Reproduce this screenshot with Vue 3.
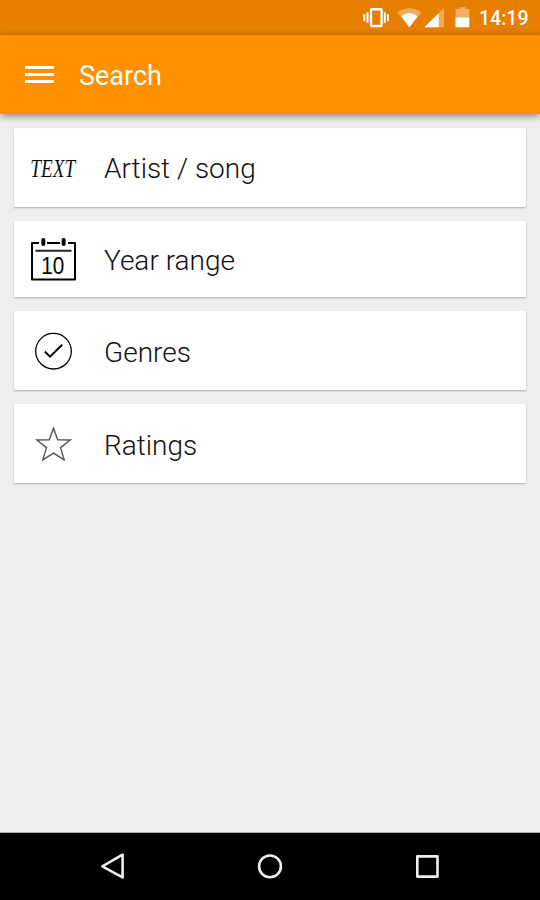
<template>
    <div class="screen">
        <div class="status-bar">
            <!-- vibrate, wifi, signal, battery -->
            <svg class="status-icons" width="112" height="35" viewBox="0 0 112 35">
                <g fill="#fff">
                    <rect x="0.3" y="14.3" width="2" height="6.6" />
                    <rect x="3.5" y="12.3" width="2" height="10.6" />
                    <rect x="20.8" y="12.3" width="2" height="10.6" />
                    <rect x="24" y="14.3" width="2" height="6.6" />
                </g>
                <rect x="8" y="9.2" width="10.6" height="16.8" rx="1" fill="none" stroke="#fff" stroke-width="2.4" />
                <path d="M46.3 27.2 L34.3 12.4 Q46.3 4.2 58.4 12.4 Z" fill="#fff" fill-opacity="0.35" />
                <path d="M46.3 27.2 L38.3 16.2 Q46.3 10 54.6 16.2 Z" fill="#fff" />
                <path d="M81 8 V27.3 H61.4 Z" fill="#fff" fill-opacity="0.35" />
                <path d="M75.7 13.2 V27.3 H61.4 Z" fill="#fff" />
                <path d="M92.5 17.3 V9 H96.3 V7.2 H102.6 V9 H106.3 V17.3 Z" fill="#fff" fill-opacity="0.4" />
                <rect x="92.5" y="17.3" width="13.8" height="10" fill="#fff" />
            </svg>
            <span class="clock">14:19</span>
        </div>

        <header class="toolbar">
            <div class="menu">
                <span></span>
                <span></span>
                <span></span>
            </div>
            <h1 class="title">Search</h1>
        </header>

        <main class="list">
            <div v-for="item in items" :key="item.id" class="card" :class="item.id">
                <svg class="icon" width="50" height="50" viewBox="0 0 50 50">
                    <text v-if="item.id === 'artist'" class="icon-text" x="1.2" y="34" textLength="45"
                        lengthAdjust="spacingAndGlyphs">TEXT</text>

                    <g v-else-if="item.id === 'year'">
                        <path d="M10 9 H3 V45.4 H46 V9 H39 M18 9 H31" fill="none" stroke="#000" stroke-width="2"
                            stroke-linejoin="round" />
                        <path d="M6.5 16.8 H42.5" stroke="#222" stroke-width="2" />
                        <rect x="12.3" y="4" width="4" height="8" rx="1.9" />
                        <rect x="32.6" y="4" width="4" height="8" rx="1.9" />
                        <text class="icon-day" x="12.3" y="40" textLength="23" lengthAdjust="spacingAndGlyphs">10</text>
                    </g>

                    <g v-else-if="item.id === 'genres'" fill="none" stroke="#000">
                        <circle cx="24.5" cy="25.2" r="17.8" stroke-width="1.3" />
                        <path d="M15.8 25.5 L21 30.7 L33.2 18.8" stroke-width="1.9" />
                    </g>

                    <path v-else
                        d="M24.5 9.2 L28.7 20.7 L41.3 21 L31.5 28.6 L35.2 40.9 L24.5 34.1 L13.8 40.9 L17.5 28.6 L7.7 21 L20.3 20.7 Z"
                        fill="none" stroke="#555" stroke-width="1.4" />
                </svg>
                <span class="label">{{ item.label }}</span>
            </div>
        </main>

        <nav class="nav-bar">
            <svg width="540" height="67" viewBox="0 0 540 67" fill="none" stroke="#eee" stroke-width="2.6"
                stroke-linejoin="round">
                <path d="M122.6 21.6 V44.4 L102.3 33.3 Z" />
                <circle cx="270" cy="33.4" r="10.9" />
                <rect x="417.3" y="23.4" width="20.2" height="20.2" />
            </svg>
        </nav>
    </div>
</template>

<script setup>
const items = [
    { id: 'artist', label: 'Artist / song' },
    { id: 'year', label: 'Year range' },
    { id: 'genres', label: 'Genres' },
    { id: 'ratings', label: 'Ratings' }
];
</script>

<style>
body {
    margin: 0;
    background: #eee;
}
</style>

<style scoped>
.screen {
    display: flex;
    flex-direction: column;
    width: 540px;
    height: 900px;
    overflow: hidden;
    background: #eee;
    font-family: Roboto, sans-serif;
}

.status-bar {
    display: flex;
    align-items: center;
    justify-content: flex-end;
    height: 35px;
    padding-right: 11px;
    background: #e67e00;
    color: #fff;
}

.status-icons {
    margin-right: 4px;
}

.clock {
    width: 50px;
    padding-top: 2px;
    font-size: 19.5px;
    font-weight: 500;
    line-height: 35px;
    white-space: nowrap;
}

.toolbar {
    display: flex;
    align-items: center;
    height: 79px;
    padding-left: 25px;
    background: #ff9000;
    box-shadow: 0 2px 7px rgba(0, 0, 0, 0.45);
}

.menu {
    display: flex;
    flex-direction: column;
    gap: 4px;
    width: 29px;
    margin-right: 25px;
}

.menu span {
    height: 3px;
    background: #fff;
}

.title {
    margin: 3px 0 0;
    color: #fff;
    font-size: 27px;
    font-weight: 400;
    line-height: 32px;
}

/* cards */
.list {
    display: flex;
    flex: 1;
    flex-direction: column;
    padding: 14px 14px 0;
}

.card {
    display: flex;
    align-items: center;
    box-sizing: border-box;
    height: 79px;
    margin-bottom: 14px;
    padding-left: 15px;
    border-radius: 1px;
    background: #fff;
    box-shadow: 0 1px 2px rgba(0, 0, 0, 0.28);
}

.card.year {
    height: 76px;
}

.icon {
    margin-right: 25px;
    overflow: visible;
}

/* the white outline slims the serif strokes */
.icon-text {
    font-family: "Liberation Serif", serif;
    font-size: 25px;
    font-style: italic;
    stroke: #fff;
    stroke-width: 0.15px;
}

.icon-day {
    font-family: "Liberation Sans", sans-serif;
    font-size: 23px;
}

.label {
    padding-top: 4px;
    color: #111;
    font-size: 28px;
    font-weight: 300;
    line-height: 34px;
}

.card.artist .label {
    padding-top: 2px;
}

.card.year .label {
    padding-top: 3px;
}

.nav-bar {
    height: 67px;
    border-top: 1px solid #aaa;
    background: #000;
}

.nav-bar svg {
    display: block;
}
</style>
